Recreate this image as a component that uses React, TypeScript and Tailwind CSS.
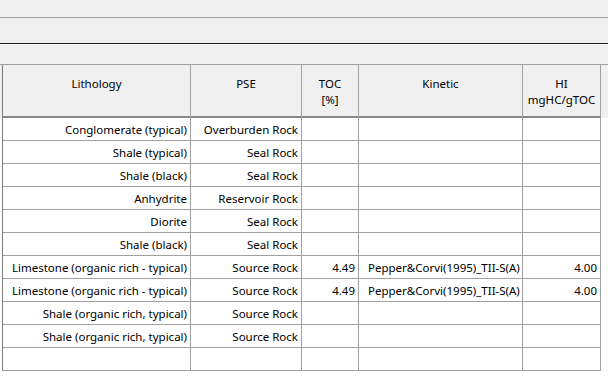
import React from "react";

const cols = [
  { w: "w-[188px]", head: ["Lithology"], align: "text-right pr-[3px]" },
  { w: "w-[111px]", head: ["PSE"], align: "text-right pr-[3px]" },
  { w: "w-[57px]", head: ["TOC", "[%]"], align: "text-right pr-[3px]" },
  { w: "w-[164px]", head: ["Kinetic"], align: "text-left pl-[9px]" },
  { w: "w-[78px]", head: ["HI", "mgHC/gTOC"], align: "text-right pr-[3px]" },
];

const rows: string[][] = [
  ["Conglomerate (typical)", "Overburden Rock", "", "", ""],
  ["Shale (typical)", "Seal Rock", "", "", ""],
  ["Shale (black)", "Seal Rock", "", "", ""],
  ["Anhydrite", "Reservoir Rock", "", "", ""],
  ["Diorite", "Seal Rock", "", "", ""],
  ["Shale (black)", "Seal Rock", "", "", ""],
  ["Limestone (organic rich - typical)", "Source Rock", "4.49", "Pepper&Corvi(1995)_TII-S(A)", "4.00"],
  ["Limestone (organic rich - typical)", "Source Rock", "4.49", "Pepper&Corvi(1995)_TII-S(A)", "4.00"],
  ["Shale (organic rich, typical)", "Source Rock", "", "", ""],
  ["Shale (organic rich, typical)", "Source Rock", "", "", ""],
  ["", "", "", "", ""],
];

export default function App() {
  return (
    <div className="w-[608px] h-[383px] overflow-hidden bg-white text-black font-['Noto_Sans',sans-serif] text-[11.5px]">
      <div className="h-[17px] bg-[#f0f0f0]" />
      <div className="h-px bg-[#a0a0a0]" />
      <div className="h-[25px] bg-[#f0f0f0]" />
      <div className="h-px bg-[#1a1a1a]" />
      <div className="h-px bg-white" />
      <div className="h-[19px] bg-[#f0f0f0]" />
      <div className="h-px bg-[#a0a0a0]" />
      <div className="flex flex-col">
        <div className="flex h-[53px] bg-[#f0f0f0]">
          <div className="w-[2px]" />
          <div className="flex border-l border-[#7a7a7a]">
            {cols.map((c, i) => (
              <div
                key={i}
                className={`${c.w} h-[53px] border-r border-b-2 border-[#a0a0a0] border-b-[#8a8a8a] pt-[11px] text-center leading-[16px]`}
              >
                {c.head.map((h, j) => (
                  <div key={j}>{h}</div>
                ))}
              </div>
            ))}
          </div>
        </div>
        {rows.map((r, ri) => (
          <div key={ri} className="flex h-[23px]">
            <div className="w-[2px]" />
            <div className="flex border-l border-[#7a7a7a]">
              {cols.map((c, ci) => (
                <div
                  key={ci}
                  className={`${c.w} h-[23px] border-r border-b border-[#a0a0a0] pt-px leading-[21px] whitespace-nowrap overflow-hidden ${c.align}`}
                >
                  {r[ci]}
                </div>
              ))}
            </div>
          </div>
        ))}
      </div>
    </div>
  );
}
